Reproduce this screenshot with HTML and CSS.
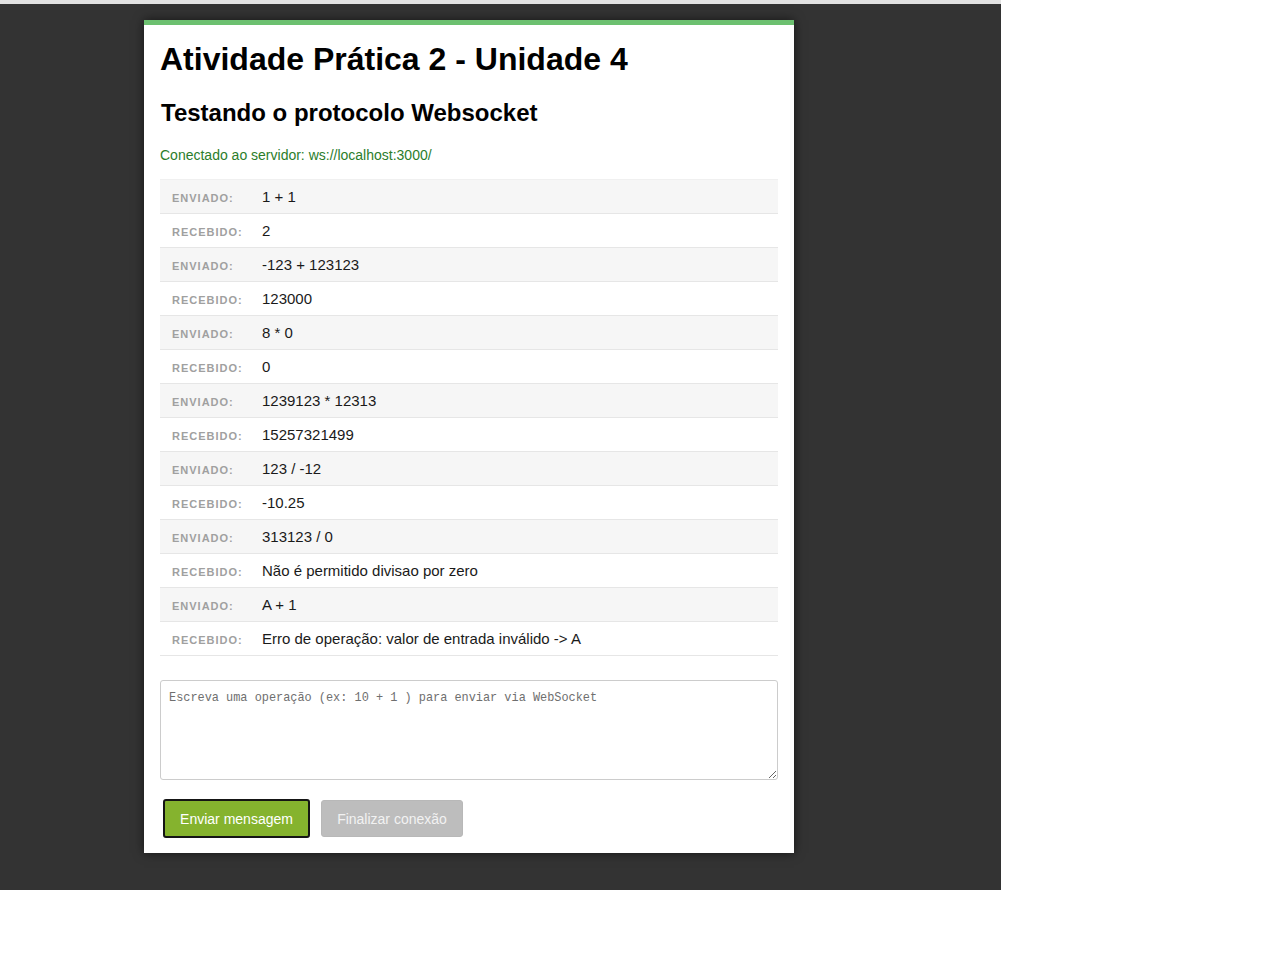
FILE: index.html
```html
<!DOCTYPE html>
<html lang="pt-BR">
<head>
<meta charset="utf-8">
<title>Atividade Prática 2 - Unidade 4</title>
<link rel="stylesheet" href="styles.css">
</head>
<body>
<div class="screen">
  <main class="card">
    <h1 class="title">Atividade Prática 2 - Unidade 4</h1>
    <h2 class="subtitle">Testando o protocolo Websocket</h2>
    <p class="status">Conectado ao servidor: ws://localhost:3000/</p>
    <ul class="log">
      <li class="row sent"><span class="label">Enviado:</span><span class="value">1 + 1</span></li>
      <li class="row recv"><span class="label">Recebido:</span><span class="value">2</span></li>
      <li class="row sent"><span class="label">Enviado:</span><span class="value">-123 + 123123</span></li>
      <li class="row recv"><span class="label">Recebido:</span><span class="value">123000</span></li>
      <li class="row sent"><span class="label">Enviado:</span><span class="value">8 * 0</span></li>
      <li class="row recv"><span class="label">Recebido:</span><span class="value">0</span></li>
      <li class="row sent"><span class="label">Enviado:</span><span class="value">1239123 * 12313</span></li>
      <li class="row recv"><span class="label">Recebido:</span><span class="value">15257321499</span></li>
      <li class="row sent"><span class="label">Enviado:</span><span class="value">123 / -12</span></li>
      <li class="row recv"><span class="label">Recebido:</span><span class="value">-10.25</span></li>
      <li class="row sent"><span class="label">Enviado:</span><span class="value">313123 / 0</span></li>
      <li class="row recv"><span class="label">Recebido:</span><span class="value">Não é permitido divisao por zero</span></li>
      <li class="row sent"><span class="label">Enviado:</span><span class="value">A + 1</span></li>
      <li class="row recv"><span class="label">Recebido:</span><span class="value">Erro de operação: valor de entrada inválido -&gt; A</span></li>
    </ul>
    <textarea class="input" placeholder="Escreva uma operação (ex: 10 + 1 ) para enviar via WebSocket"></textarea>
    <div class="actions">
      <button class="btn btn-send" type="button">Enviar mensagem</button>
      <button class="btn btn-close" type="button">Finalizar conexão</button>
    </div>
  </main>
</div>
</body>
</html>
```

FILE: styles.css
```css
html, body {
  margin: 0;
  padding: 0;
  background: #ffffff;
}

body {
  font-family: "Liberation Sans", Arial, sans-serif;
  color: #111;
}

.screen {
  width: 1001px;
  height: 890px;
  box-sizing: border-box;
  background: #333333;
  border-top: 4px solid #e2e2e2;
  padding: 16px 0 0 144px;
}

.card {
  width: 650px;
  height: 833px;
  box-sizing: border-box;
  background: #ffffff;
  border-top: 5px solid #6cc070;
  padding: 16px 16px 16px 16px;
  box-shadow: 0 0 10px rgba(0, 0, 0, 0.6);
}

.title {
  margin: 0;
  font-size: 32px;
  line-height: 37px;
  font-weight: bold;
  color: #000;
}

.subtitle {
  margin: 21px 0 0 1px;
  font-size: 24px;
  line-height: 28px;
  font-weight: bold;
  color: #000;
}

.status {
  margin: 20px 0 0 0;
  font-size: 14px;
  line-height: 16px;
  color: #2b7d2b;
}

.log {
  list-style: none;
  margin: 16px 0 0 0;
  padding: 0;
  border-top: 1px solid #f0f0f0;
}

.row {
  display: flex;
  align-items: center;
  height: 34px;
  box-sizing: border-box;
  padding: 0 12px;
  border-bottom: 1px solid #e6e6e6;
}

.row.sent {
  background: #f6f6f6;
}

.row.recv {
  background: #ffffff;
}

.label {
  width: 90px;
  flex: none;
  font-size: 11px;
  font-weight: bold;
  letter-spacing: 1px;
  text-transform: uppercase;
  color: #a0a0a0;
  padding-top: 2px;
}

.value {
  font-size: 15px;
  color: #1a1a1a;
}

.input {
  display: block;
  width: 618px;
  height: 100px;
  box-sizing: border-box;
  margin: 24px 0 0 0;
  padding: 9px 8px 8px 8px;
  border: 1px solid #cccccc;
  border-radius: 3px;
  font-family: "Liberation Mono", "DejaVu Sans Mono", monospace;
  font-size: 11.9px;
  line-height: 16px;
  resize: vertical;
  background: #fff;
}

.input::placeholder {
  color: #6f6f6f;
}

.actions {
  display: flex;
  align-items: center;
  gap: 11px;
  margin-top: 19px;
  padding-left: 3px;
}

.btn {
  font-family: "Liberation Sans", Arial, sans-serif;
  font-size: 14px;
  color: #ffffff;
  border-radius: 3px;
  cursor: pointer;
  padding: 0;
}

.btn-send {
  width: 147px;
  height: 39px;
  background: #85b32e;
  border: 2px solid #151515;
}

.btn-close {
  width: 142px;
  height: 37px;
  background: #bdbdbd;
  border: 1px solid #b8b8b8;
  color: #f2f2f2;
}
```
